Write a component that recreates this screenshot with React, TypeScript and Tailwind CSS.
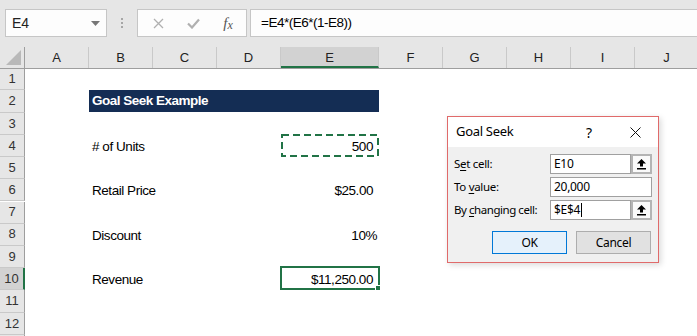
import React from 'react';

const COLS = [
  { name: 'A', w: 'w-[64px]' },
  { name: 'B', w: 'w-[64px]' },
  { name: 'C', w: 'w-[64px]' },
  { name: 'D', w: 'w-[64px]' },
  { name: 'E', w: 'w-[98px]' },
  { name: 'F', w: 'w-[64px]' },
  { name: 'G', w: 'w-[64px]' },
  { name: 'H', w: 'w-[64px]' },
  { name: 'I', w: 'w-[64px]' },
  { name: 'J', w: 'w-[64px]' },
];

const RowHead: React.FC<{ n?: number; h: string; selected?: boolean }> = ({ n, h, selected }) => (
  <div
    className={`${h} w-[25px] shrink-0 flex items-center justify-center text-[13px] text-[#333] border-b border-[#c9c9c9] ${
      selected ? 'bg-[#d2d2d2] border-r-2 border-r-[#217346]' : 'bg-[#e6e6e6] border-r border-r-[#9e9e9e]'
    }`}
  >
    {n}
  </div>
);

const DataRow: React.FC<{
  n: number;
  h: string;
  label: string;
  value: string;
  pad?: string;
  mark?: 'dashed' | 'solid';
}> = ({ n, h, label, value, pad = 'pr-[6px]', mark }) => (
  <div className="flex">
    <RowHead n={n} h={h} selected={mark === 'solid'} />
    <div className="w-[64px] shrink-0" />
    <div className="w-[192px] shrink-0 flex items-center pl-[3px] pt-[2px] text-[13.5px] tracking-[-0.45px] text-black whitespace-nowrap">
      {label}
    </div>
    <div className={`relative w-[98px] shrink-0 flex items-center justify-end pt-[2px] ${pad} text-[13.5px] tracking-[-0.45px] text-black`}>
      {value}
      {mark === 'dashed' && (
        <svg className="absolute left-0 -top-[1px]" width="98" height="23">
          <rect x="1" y="1" width="96" height="21" fill="none" stroke="#217346" strokeWidth="2" strokeDasharray="7 4" />
        </svg>
      )}
      {mark === 'solid' && (
        <div className="absolute -left-[1px] -top-[2px] w-[100px] h-[24px] border-2 border-[#217346]">
          <div className="absolute -right-[3px] -bottom-[3px] w-[6px] h-[6px] bg-[#217346] border border-white" />
        </div>
      )}
    </div>
  </div>
);

const EmptyRow: React.FC<{ n?: number; h: string }> = ({ n, h }) => (
  <div className="flex">
    <RowHead n={n} h={h} />
  </div>
);

const RefButton = () => (
  <div className="w-[21px] h-[20px] shrink-0 border-2 border-[#b4b4b4] bg-[#fafafa] flex items-center justify-center">
    <svg width="11" height="12" viewBox="0 0 11 12">
      <path d="M5.5 1 L10 5.5 H7 V8.5 H4 V5.5 H1 Z" fill="#000" />
      <rect x="1" y="10" width="9" height="1.5" fill="#000" />
    </svg>
  </div>
);

export default function App() {
  return (
    <div className="relative w-[697px] h-[336px] overflow-hidden bg-white font-['Liberation_Sans',Arial,sans-serif]">
      {/* Formula bar */}
      <div className="h-[47px] bg-[#e6e6e6] flex items-start pt-[9px] pl-[5px]">
        <div className="w-[102px] h-[28px] shrink-0 bg-[#fdfdfd] border border-[#c6c6c6] flex items-center pl-[6px] pr-[6px] text-[14px] text-[#222]">
          <span className="flex-1">E4</span>
          <svg width="9" height="5" viewBox="0 0 9 5">
            <path d="M0 0 H9 L4.5 5 Z" fill="#777" />
          </svg>
        </div>
        <div className="w-[30px] shrink-0 h-[28px] flex flex-col items-center justify-center gap-[2px]">
          <div className="w-[2px] h-[2px] bg-[#a6a6a6]" />
          <div className="w-[2px] h-[2px] bg-[#a6a6a6]" />
          <div className="w-[2px] h-[2px] bg-[#a6a6a6]" />
        </div>
        <div className="w-[110px] h-[28px] shrink-0 bg-[#fdfdfd] border border-[#c6c6c6] flex items-center">
          <div className="w-[38px] flex justify-center pl-[3px]">
            <svg width="11" height="11" viewBox="0 0 11 11">
              <path d="M1 1 L10 10 M10 1 L1 10" stroke="#b0b0b0" strokeWidth="1.3" />
            </svg>
          </div>
          <div className="w-[34px] flex justify-center">
            <svg width="13" height="11" viewBox="0 0 13 11">
              <path d="M1 5.5 L5 9.5 L12 1.5" stroke="#b0b0b0" strokeWidth="2.2" fill="none" />
            </svg>
          </div>
          <div className="w-[36px] flex justify-center font-['Liberation_Serif',serif] italic text-[15px] text-[#555] leading-none">
            <span>f</span>
            <span className="text-[12px] mt-[3px]">x</span>
          </div>
        </div>
        <div className="flex-1 ml-[3px] h-[28px] bg-[#fdfdfd] border border-[#c6c6c6] border-r-0 flex items-center pl-[10px] text-[13.5px] tracking-[-0.5px] text-black">
          =E4*(E6*(1-E8))
        </div>
      </div>

      {/* Column headers */}
      <div className="flex h-[22px] bg-[#e6e6e6] border-b border-[#9e9e9e]">
        <div className="w-[25px] shrink-0 border-r border-[#9e9e9e] flex items-end justify-end pr-[3px] pb-[3px]">
          <svg width="15" height="15" viewBox="0 0 15 15">
            <path d="M15 0 V15 H0 Z" fill="#b9b9b9" />
          </svg>
        </div>
        {COLS.map((c) => (
          <div
            key={c.name}
            className={`${c.w} shrink-0 flex items-center justify-center text-[13px] text-[#222] border-r border-[#c9c9c9] ${
              c.name === 'E' ? 'bg-[#d2d2d2] border-b-2 border-b-[#217346] pt-[2px]' : ''
            }`}
          >
            {c.name}
          </div>
        ))}
      </div>

      {/* Rows */}
      <EmptyRow n={1} h="h-[21px]" />
      <div className="flex">
        <RowHead n={2} h="h-[23px]" />
        <div className="w-[64px] shrink-0" />
        <div className="w-[290px] h-[22px] shrink-0 bg-[#142d54] flex items-center pl-[3px] pt-[1px] text-[13.5px] font-bold tracking-[-0.5px] text-white">
          Goal Seek Example
        </div>
      </div>
      <EmptyRow n={3} h="h-[22px]" />
      <DataRow n={4} h="h-[22px]" label="# of Units" value="500" mark="dashed" />
      <EmptyRow n={5} h="h-[22px]" />
      <DataRow n={6} h="h-[22px]" label="Retail Price" value="$25.00" />
      <EmptyRow n={7} h="h-[22px]" />
      <DataRow n={8} h="h-[22px]" label="Discount" value="10%" pad="pr-[2px]" />
      <EmptyRow n={9} h="h-[22px]" />
      <DataRow n={10} h="h-[22px]" label="Revenue" value="$11,250.00" mark="solid" />
      <EmptyRow n={11} h="h-[23px]" />
      <EmptyRow n={12} h="h-[22px]" />
      <EmptyRow h="h-[22px]" />

      {/* Goal Seek dialog */}
      <div className="absolute left-[447px] top-[116px] w-[212px] h-[147px] border border-[#e06a6a] bg-[#f0f0f0] font-['Noto_Sans','Open_Sans',sans-serif] text-black shadow-[2px_2px_6px_rgba(0,0,0,0.15)]">
        <div className="h-[30px] bg-white flex items-center">
          <span className="flex-1 pl-[8px] text-[13px] tracking-[-0.3px]">Goal Seek</span>
          <div className="w-[46px] flex justify-center text-[14px]">?</div>
          <div className="w-[46px] flex justify-center">
            <svg width="11" height="11" viewBox="0 0 11 11">
              <path d="M0.5 0.5 L10.5 10.5 M10.5 0.5 L0.5 10.5" stroke="#111" strokeWidth="1" />
            </svg>
          </div>
        </div>
        <div className="pl-[6px] pr-[6px] pt-[7px] text-[12px] tracking-[-0.3px]">
          <div className="flex items-center h-[20px]">
            <span className="w-[96px] shrink-0 text-[11.5px]">
              S<u className="underline-offset-2">e</u>t cell:
            </span>
            <div className="w-[81px] h-[20px] border border-[#a0a0a0] bg-white flex items-center pl-[3px]">E10</div>
            <RefButton />
          </div>
          <div className="flex items-center h-[20px] mt-[3px]">
            <span className="w-[96px] shrink-0 text-[11.5px]">
              To <u className="underline-offset-2">v</u>alue:
            </span>
            <div className="w-[102px] h-[20px] border border-[#a0a0a0] bg-white flex items-center pl-[3px]">20,000</div>
          </div>
          <div className="flex items-center h-[20px] mt-[3px]">
            <span className="w-[96px] shrink-0 whitespace-nowrap text-[11.5px] tracking-[-0.45px]">
              By <u className="underline-offset-2">c</u>hanging cell:
            </span>
            <div className="w-[81px] h-[20px] border border-[#a0a0a0] bg-white flex items-center pl-[3px]">
              $E$4
              <div className="w-[1px] h-[14px] bg-black ml-[1px]" />
            </div>
            <RefButton />
          </div>
          <div className="flex justify-end gap-[9px] mt-[11px] pr-[1px]">
            <div className="w-[75px] h-[23px] border border-[#0078d7] bg-[#e5f1fb] flex items-center justify-center">OK</div>
            <div className="w-[75px] h-[23px] border border-[#adadad] bg-[#e1e1e1] flex items-center justify-center">Cancel</div>
          </div>
        </div>
      </div>
    </div>
  );
}
